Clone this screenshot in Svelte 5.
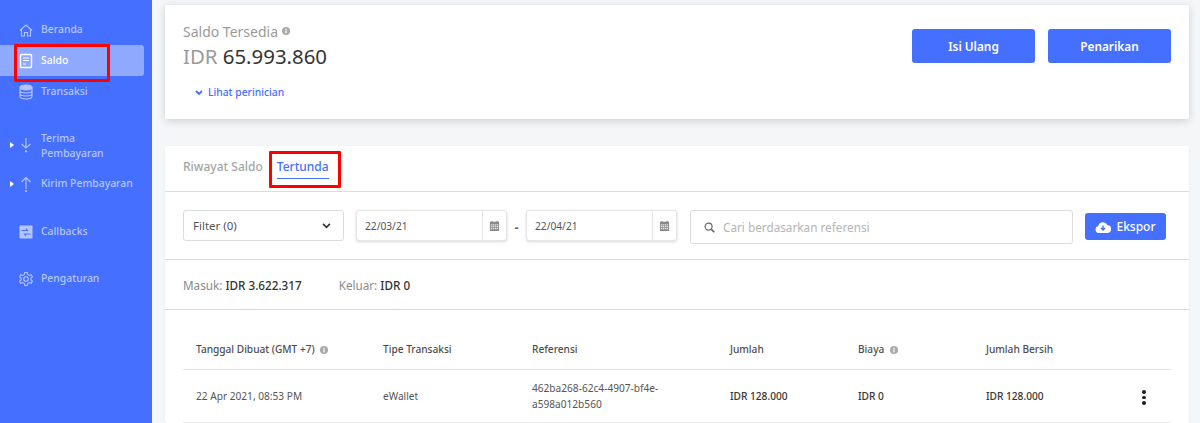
<script>
  const topNav = [
    { label: "Beranda", icon: "home" },
    { label: "Saldo", icon: "doc", active: true },
    { label: "Transaksi", icon: "db" },
  ];
  const columns = [
    { label: "Tanggal Dibuat (GMT +7)", w: 187, info: true },
    { label: "Tipe Transaksi", w: 149 },
    { label: "Referensi", w: 198 },
    { label: "Jumlah", w: 128 },
    { label: "Biaya", w: 128, info: true },
    { label: "Jumlah Bersih", w: 138 },
  ];
</script>

{#snippet info(size)}
  <svg class="info" width={size} height={size} viewBox="0 0 10 10">
    <circle cx="5" cy="5" r="5" fill="#a9a9a9" />
    <rect x="4.2" y="4.2" width="1.6" height="3.6" fill="#fff" />
    <rect x="4.2" y="2.2" width="1.6" height="1.4" fill="#fff" />
  </svg>
{/snippet}

{#snippet calendar()}
  <svg width="11" height="11" viewBox="0 0 12 12" fill="#8a8a8a">
    <path d="M1 2h1.5V1h1.4v1h4.2V1h1.4v1H11v10H1z" />
    <path fill="#e4e4e4" d="M2 4.5h1.6v1.4H2zM4.2 4.5h1.6v1.4H4.2zM6.4 4.5H8v1.4H6.4zM8.6 4.5H10v1.4H8.600zM2 6.600h1.600V8H2zM4.200 6.600h1.600V8H4.200zM6.400 6.600H8V8H6.400zM8.600 6.600H10V8H8.600zM2 8.700h1.600v1.400H2zM4.200 8.700h1.600v1.400H4.200zM6.400 8.700H8v1.400H6.400zM8.600 8.700H10v1.400H8.600z" />
  </svg>
{/snippet}

{#snippet navIcon(name)}
  <svg class="nav-icon" width="16" height="16" viewBox="0 0 16 16" fill="none" stroke="currentColor" stroke-width="1.1">
    {#if name === "home"}
      <path d="M2 8.500 8 3l6 5.500M3.500 7.500V14h3v-3.500h3V14h3V7.500" />
    {:else if name === "doc"}
      <rect x="2.500" y="1.500" width="11" height="13" rx="1" stroke-width="1.400" />
      <path d="M5 5h6M5 7.500h6M5 11h3" />
    {:else if name === "db"}
      <ellipse cx="8" cy="3.500" rx="6" ry="2.500" fill="currentColor" />
      <path d="M2 3.500v9c0 1.500 2.700 2.500 6 2.500s6-1 6-2.500v-9M2 6.500c0 1.500 2.700 2.500 6 2.500s6-1 6-2.500M2 9.500c0 1.500 2.700 2.500 6 2.500s6-1 6-2.500" />
    {:else if name === "down"}
      <path d="M8 1v9M3.500 7 8 11l4.500-4" />
      <circle cx="8" cy="14.300" r="1.100" fill="currentColor" stroke="none" />
    {:else if name === "up"}
      <path d="M8 13V2M3.500 6 8 1.500 12.500 6" />
      <circle cx="8" cy="15" r="1.100" fill="currentColor" stroke="none" />
    {:else if name === "callback"}
      <rect x="1.500" y="1.500" width="13" height="13" rx="1" fill="currentColor" stroke="none" />
      <path d="M3.500 6.500h6l-1.500-2M12.500 10h-6l1.500 2" stroke="#4570ff" />
    {:else}
      <circle cx="8" cy="8" r="2.300" />
      <path d="M6.800 1.500h2.400l.4 2 1.700.9 1.900-.7 1.200 2.100-1.500 1.300v1.800l1.500 1.300-1.200 2.100-1.900-.7-1.700.9-.4 2H6.800l-.4-2-1.700-.9-1.900.7-1.200-2.100 1.500-1.300V7.100L1.600 5.800l1.200-2.100 1.900.7 1.700-.9z" />
    {/if}
  </svg>
{/snippet}

<div class="page">
  <aside class="sidebar">
    <nav class="group">
      {#each topNav as item}
        <div class="nav-item" class:active={item.active}>
          {@render navIcon(item.icon)}
          <span>{item.label}</span>
        </div>
      {/each}
    </nav>

    <nav class="group pay">
      <div class="nav-item tall">
        <i class="caret"></i>
        {@render navIcon("down")}
        <span>Terima Pembayaran</span>
      </div>
      <div class="nav-item">
        <i class="caret"></i>
        {@render navIcon("up")}
        <span class="nowrap">Kirim Pembayaran</span>
      </div>
    </nav>

    <div class="nav-item solo">
      {@render navIcon("callback")}
      <span>Callbacks</span>
    </div>
    <div class="nav-item solo last">
      {@render navIcon("gear")}
      <span>Pengaturan</span>
    </div>

    <div class="mark mark-saldo"></div>
  </aside>

  <main class="main">
    <section class="card balance">
      <div>
        <div class="balance-label">Saldo Tersedia {@render info(8)}</div>
        <div class="amount"><span>IDR</span> 65.993.860</div>
        <div class="details">
          <svg width="8" height="6" viewBox="0 0 8 6" fill="none" stroke="#4570ff" stroke-width="1.800"><path d="M1 1l3 3 3-3" /></svg>
          Lihat perinician
        </div>
      </div>
      <div class="actions">
        <button class="btn">Isi Ulang</button>
        <button class="btn">Penarikan</button>
      </div>
    </section>

    <section class="card history">
      <div class="tabs">
        <span class="tab">Riwayat Saldo</span>
        <span class="tab current">Tertunda</span>
        <div class="mark mark-tab"></div>
      </div>

      <div class="filters">
        <div class="field select">
          <span>Filter (0)</span>
          <svg width="9" height="6" viewBox="0 0 10 7" fill="none" stroke="#333" stroke-width="2"><path d="M1 1l4 4 4-4" /></svg>
        </div>
        <div class="field date">
          <span class="date-value">22/03/21</span>
          <span class="date-icon">{@render calendar()}</span>
        </div>
        <span class="dash">-</span>
        <div class="field date">
          <span class="date-value">22/04/21</span>
          <span class="date-icon">{@render calendar()}</span>
        </div>
        <div class="field search">
          <svg width="11" height="11" viewBox="0 0 12 12" fill="none" stroke="#666" stroke-width="1.300"><circle cx="5" cy="5" r="3.800" /><path d="M8 8l3.200 3.200" stroke-width="1.700" /></svg>
          <span>Cari berdasarkan referensi</span>
        </div>
        <button class="export">
          <svg width="16" height="12" viewBox="0 0 16 12"><path fill="#fff" d="M4 12a3.500 3.500 0 0 1-.8-6.900A4.800 4.800 0 0 1 12.300 4 4 4 0 0 1 12 12z" /><path d="M8 4.500v4M6 7l2 2 2-2" fill="none" stroke="#4570ff" stroke-width="1.400" /></svg>
          Ekspor
        </button>
      </div>

      <div class="totals">
        <span class="total">Masuk: <b>IDR 3.622.317</b></span>
        <span class="total">Keluar: <b>IDR 0</b></span>
      </div>

      <div class="table">
        <div class="row head">
          {#each columns as col}
            <div class="cell" style="width: {col.w}px">
              {col.label}
              {#if col.info}{@render info(8)}{/if}
            </div>
          {/each}
        </div>
        <div class="row body">
          <div class="cell" style="width: 187px">22 Apr 2021, 08:53 PM</div>
          <div class="cell" style="width: 149px">eWallet</div>
          <div class="cell ref" style="width: 198px">462ba268-62c4-4907-bf4e-<br />a598a012b560</div>
          <div class="cell money" style="width: 128px">IDR 128.000</div>
          <div class="cell money" style="width: 128px">IDR 0</div>
          <div class="cell money" style="width: 138px">IDR 128.000</div>
          <div class="more"><i></i><i></i><i></i></div>
        </div>
      </div>
    </section>
  </main>
</div>

<style>
  :global(body) {
    margin: 0;
    background: #f5f6f7;
    font-family: "Noto Sans", "Open Sans", sans-serif;
    overflow: hidden;
  }

  .page {
    display: flex;
    height: 423px;
    overflow: hidden;
  }

  .sidebar {
    position: relative;
    flex: 0 0 152px;
    min-width: 0;
    background: #4570ff;
    color: #b4c6ff;
    font-size: 10.4px;
    font-weight: 500;
    padding-top: 14px;
    box-sizing: border-box;
  }

  .group {
    display: flex;
    flex-direction: column;
  }

  .nav-item {
    position: relative;
    display: flex;
    align-items: center;
    gap: 7px;
    height: 31px;
    padding-left: 18px;
    margin-right: 8px;
    border-radius: 0 3px 3px 0;
  }

  .nav-item span {
    margin-bottom: 2px;
  }

  .nav-item.active {
    background: #8fa9ff;
    color: #fff;
  }

  .nav-icon {
    flex: none;
  }

  .pay {
    margin-top: 15px;
  }

  .nav-item.tall {
    height: 46px;
    line-height: 15.500px;
    padding-right: 34px;
  }

  .nav-item.tall span {
    margin: 2px 0 0;
  }

  .nowrap {
    white-space: nowrap;
  }

  .caret {
    position: absolute;
    left: 10px;
    top: 50%;
    margin-top: -3px;
    border-left: 4px solid #fff;
    border-top: 3px solid transparent;
    border-bottom: 3px solid transparent;
  }

  .solo {
    margin-top: 17px;
  }

  .last {
    margin-top: 16px;
  }

  .mark {
    position: absolute;
    border: 3px solid #f00;
    box-sizing: border-box;
    border-radius: 1px;
  }

  .mark-saldo {
    left: 14px;
    top: 44px;
    width: 96px;
    height: 38px;
  }

  .main {
    flex: 1;
    padding: 5px 11px 0 13px;
    min-width: 0;
  }

  .card {
    background: #fff;
    border-radius: 2px;
  }

  .balance {
    height: 114px;
    display: flex;
    justify-content: space-between;
    padding: 19px 18px 0;
    box-sizing: border-box;
    box-shadow: 0 2px 8px rgba(0, 0, 0, 0.16);
    margin-bottom: 27px;
  }

  .balance-label {
    font-size: 14px;
    line-height: 16px;
    color: #9a9a9a;
  }

  .balance-label .info {
    vertical-align: 2px;
  }

  .amount {
    font-size: 20.400px;
    line-height: 27px;
    color: #333;
    margin-top: 3px;
  }

  .amount span {
    color: #9a9a9a;
  }

  .details {
    display: flex;
    align-items: center;
    gap: 5px;
    font-size: 10.300px;
    font-weight: 500;
    color: #4570ff;
    margin: 15px 0 0 12px;
    line-height: 15px;
  }

  .actions {
    display: flex;
    gap: 13px;
    margin-top: 5px;
  }

  .btn {
    width: 123px;
    height: 34px;
    background: #4570ff;
    color: #fff;
    border: 0;
    border-radius: 3px;
    font: 600 11.800px "Noto Sans", sans-serif;
  }

  .history {
    box-shadow: 0 1px 3px rgba(0, 0, 0, 0.06);
  }

  .tabs {
    position: relative;
    display: flex;
    gap: 14px;
    height: 46px;
    padding: 12px 18px 0;
    box-sizing: border-box;
    border-bottom: 1px solid #dcdcdc;
    font-size: 12px;
    font-weight: 500;
  }

  .tab {
    color: #a5a5a5;
    height: 20px;
    line-height: 18px;
  }

  .tab.current {
    color: #4570ff;
    border-bottom: 1px solid #4570ff;
  }

  .mark-tab {
    left: 104px;
    top: 5px;
    width: 72px;
    height: 37px;
  }

  .filters {
    display: flex;
    align-items: flex-start;
    height: 68px;
    padding: 18px 18px 0;
    box-sizing: border-box;
    border-bottom: 1px solid #dcdcdc;
    font-size: 11.500px;
    color: #555;
  }

  .field {
    display: flex;
    align-items: center;
    box-sizing: border-box;
    border: 1px solid #dcdcdc;
    border-radius: 3px;
    background: #fff;
  }

  .select {
    width: 161px;
    height: 31px;
    justify-content: space-between;
    padding: 0 12px 0 9px;
    margin-right: 12px;
  }

  .date {
    width: 151px;
    height: 31px;
    box-shadow: 0 1px 3px rgba(0, 0, 0, 0.16);
    border-color: #e6e6e6;
  }

  .date-value {
    flex: 1;
    padding-left: 8px;
    font-size: 10.200px;
  }

  .date-icon {
    display: flex;
    align-items: center;
    justify-content: center;
    width: 23px;
    height: 100%;
    border-left: 1px solid #e6e6e6;
  }

  .dash {
    width: 19px;
    font-size: 13px;
    line-height: 35px;
    text-align: center;
    font-weight: 700;
    color: #666;
  }

  .search {
    width: 383px;
    height: 34px;
    margin-left: 13px;
    padding-left: 13px;
    gap: 8px;
    font-size: 11.750px;
    color: #b5b5b5;
  }

  .export {
    display: flex;
    align-items: center;
    justify-content: center;
    gap: 5px;
    width: 81px;
    height: 27px;
    margin: 3px 0 0 12px;
    background: #4570ff;
    color: #fff;
    border: 0;
    border-radius: 3px;
    font: 500 12px "Noto Sans", sans-serif;
  }

  .totals {
    display: flex;
    gap: 37px;
    align-items: center;
    height: 49px;
    padding: 0 18px;
    border-bottom: 1px solid #dcdcdc;
    font-size: 11.700px;
    color: #8a8a8a;
  }

  .total b {
    font-weight: 500;
    color: #333;
  }

  .table {
    padding: 0 18px;
    margin-top: 19px;
  }

  .row {
    display: flex;
    align-items: center;
    padding-left: 13px;
    font-size: 10.150px;
    color: #555;
  }

  .head {
    height: 41px;
    box-sizing: border-box;
    font-weight: 500;
    border-bottom: 1px solid #e2e2e2;
    color: #4d4d4d;
  }

  .head .info {
    margin-left: 3px;
    vertical-align: -0.500px;
  }

  .body {
    height: 53px;
    box-sizing: border-box;
    position: relative;
    border-bottom: 1px solid #e8e8e8;
  }

  .cell {
    flex: none;
  }

  .ref {
    line-height: 16px;
  }

  .money {
    color: #333;
    font-weight: 500;
  }

  .more {
    position: absolute;
    right: 25px;
    top: 20px;
    display: flex;
    flex-direction: column;
    gap: 2px;
  }

  .more i {
    width: 4px;
    height: 3.500px;
    border-radius: 50%;
    background: #222;
  }
</style>
